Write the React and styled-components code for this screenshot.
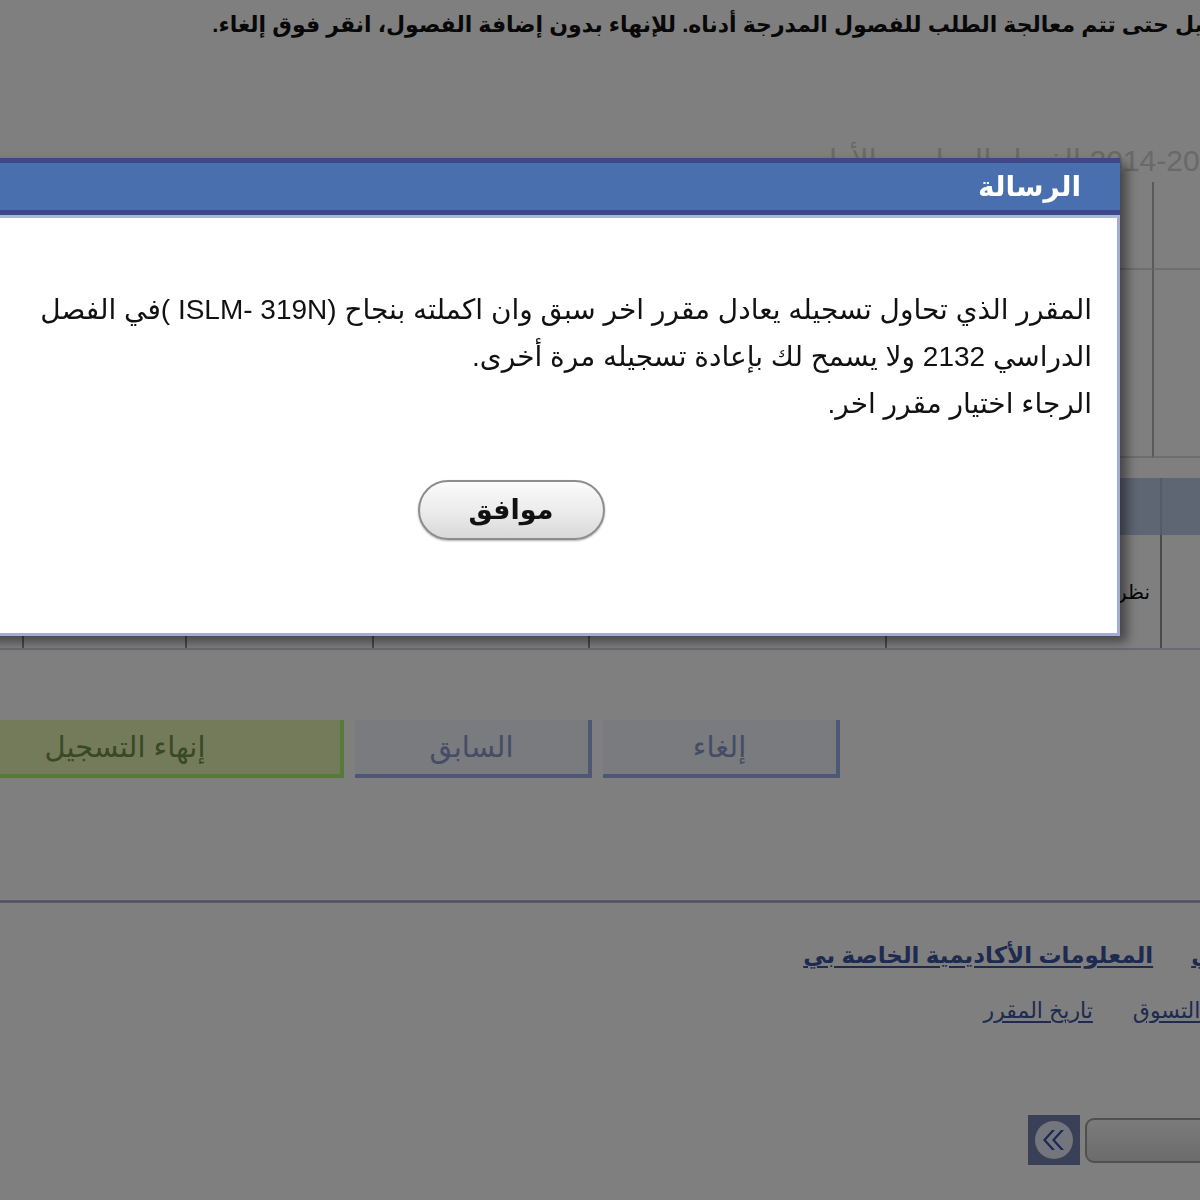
import React from "react";
import styled, { createGlobalStyle } from "styled-components";

const GlobalStyle = createGlobalStyle`
  html, body {
    margin: 0;
    padding: 0;
    background: #fff;
    overflow: hidden;
  }
  body {
    font-family: "Liberation Sans", "DejaVu Sans", sans-serif;
  }
`;

const Page = styled.div`
  direction: rtl;
  position: relative;
  width: 1200px;
  height: 1200px;
  overflow: hidden;
  padding-top: 10px;
  box-sizing: border-box;
  background: #fff;
  font-family: "Liberation Sans", "DejaVu Sans", sans-serif;
`;

const Intro = styled.p`
  margin: 0 -228px 0 0;
  font-size: 22px;
  line-height: 30px;
  font-weight: bold;
  color: #111;
  white-space: nowrap;
`;

const TermLabel = styled.div`
  margin: 106px -33px 0 0;
  font-size: 30px;
  line-height: 30px;
  color: #d2d2d2;
  white-space: nowrap;
`;

const InfoTable = styled.div`
  display: grid;
  grid-template-columns: 88px 1fr;
  grid-template-rows: 88px 188px;
  width: 1340px;
  margin: 6px -40px 0 0;
`;

const InfoCell = styled.div`
  border-bottom: 2px solid #dcdcdc;
  border-left: ${(p) => (p.$first ? "2px solid #b4b4b4" : "none")};
`;

const CourseTable = styled.div`
  display: grid;
  grid-template-columns: 80px 275px 297px 216px 187px 163px 122px;
  grid-template-rows: 57px 113px;
  width: 1340px;
  margin: 20px -40px 0 0;
  border-bottom: 2px solid #d4d4e0;
`;

const HeadCell = styled.div`
  display: flex;
  align-items: center;
  justify-content: center;
  padding: 0 10px;
  background: #bccbe6;
  border-left: 2px solid #a8b6d4;
  font-size: 18px;
  font-weight: bold;
  color: #223;
`;

const DataCell = styled.div`
  display: flex;
  align-items: center;
  padding: 0 10px;
  border-left: 2px solid #949494;
  font-size: 20px;
  color: #111;
`;

const ButtonRow = styled.div`
  display: flex;
  gap: 11px;
  padding-right: 360px;
  margin-top: 70px;
`;

const PageButton = styled.div`
  display: flex;
  align-items: center;
  justify-content: center;
  flex: none;
  box-sizing: border-box;
  width: ${(p) => (p.$wide ? "434px" : "237px")};
  height: 58px;
  font-size: 29px;
  background: ${(p) => (p.$green ? "#e6f6b6" : "#f2f6ff")};
  color: ${(p) => (p.$green ? "#74904c" : "#8c98cc")};
  border-right: 4px solid ${(p) => (p.$green ? "#aef470" : "#9eaeea")};
  border-bottom: 4px solid ${(p) => (p.$green ? "#aef470" : "#9eaeea")};
`;

const Rule = styled.div`
  margin-top: 122px;
  height: 1px;
  background: #9a9cc0;
  border-top: 1px solid #b8bad6;
  border-bottom: 1px solid #b8bad6;
`;

const LinkRow = styled.div`
  display: flex;
  gap: ${(p) => p.$gap}px;
  margin: ${(p) => p.$top}px ${(p) => -p.$shift}px 0 0;
  white-space: nowrap;
`;

const NavLink = styled.a`
  font-size: ${(p) => (p.$bold ? "23px" : "22px")};
  line-height: 30px;
  font-weight: ${(p) => (p.$bold ? "bold" : "normal")};
  color: #3c54a0;
  text-decoration: underline;
  text-underline-offset: 3px;
`;

const Pager = styled.div`
  display: flex;
  align-items: center;
  gap: 5px;
  margin: 89px -85px 0 0;
`;

const PagerField = styled.div`
  width: 200px;
  height: 45px;
  box-sizing: border-box;
  border: 2px solid #a0a0a0;
  border-radius: 9px;
  background: linear-gradient(#f6f6f6, #d8d8d8);
`;

const Overlay = styled.div`
  position: fixed;
  inset: 0;
  background: rgba(0, 0, 0, 0.5);
`;

const Dialog = styled.div`
  position: absolute;
  top: 158px;
  left: -98px;
  width: 1218px;
  height: 478px;
  box-sizing: border-box;
  display: flex;
  flex-direction: column;
  background: #fff;
  border: 3px solid #a4acd4;
  border-top: none;
  box-shadow: 7px 6px 10px rgba(0, 0, 0, 0.45);
  direction: rtl;
  font-family: "Liberation Sans", "DejaVu Sans", sans-serif;
`;

const TitleBar = styled.div`
  display: flex;
  align-items: center;
  height: 47px;
  padding-right: 39px;
  background: #4a6fae;
  border-top: 5px solid #3e4888;
  border-bottom: 5px solid #3e4888;
  box-shadow: 0 3px 0 #aab8d8;
  margin: 0 -3px 3px;
  color: #fff;
  font-size: 28px;
  font-weight: bold;
`;

const Body = styled.div`
  flex: 1;
  display: flex;
  flex-direction: column;
  padding: 68px 25px 0;
`;

const Message = styled.div`
  font-size: 28px;
  line-height: 47px;
  color: #111;
`;

const Line = styled.div`
  white-space: nowrap;
`;

const OkButton = styled.button`
  align-self: center;
  width: 187px;
  height: 60px;
  margin-top: 53px;
  border: 2px solid #8c8c8c;
  border-radius: 30px;
  background: linear-gradient(#fbfbfb, #ececec 50%, #d9d9d9);
  box-shadow: 0 1px 2px rgba(0, 0, 0, 0.3);
  font-family: "Liberation Sans", "DejaVu Sans", sans-serif;
  font-size: 27px;
  font-weight: bold;
  color: #111;
  cursor: pointer;
`;

function BackIcon() {
  return (
    <svg width="52" height="50" viewBox="0 0 52 50">
      <rect x="0" y="0" width="52" height="50" fill="#7480b0" />
      <circle cx="26" cy="25" r="19" fill="#e6ecfa" />
      <path d="M24 15 L15 25 L24 35 L27 35 L18 25 L27 15 Z" fill="#3c50a8" />
      <path d="M33 15 L24 25 L33 35 L36 35 L27 25 L36 15 Z" fill="#3c50a8" />
    </svg>
  );
}

const heads = ["", "نوع الجدول", "المقرر", "الشعبة", "الساعات", "الحالة", "الإجراء"];
const cells = ["", "نظري", "ISLM 319N", "1", "2", "", ""];

export default function App() {
  return (
    <>
      <GlobalStyle />
      <Page>
        <Intro>
          انقر فوق إنهاء التسجيل حتى تتم معالجة الطلب للفصول المدرجة أدناه. للإنهاء بدون إضافة الفصول، انقر فوق إلغاء.
        </Intro>
        <TermLabel>2014-2015 الفصل الدراسي الأول</TermLabel>
        <InfoTable>
          <InfoCell $first />
          <InfoCell />
          <InfoCell $first />
          <InfoCell />
        </InfoTable>
        <CourseTable>
          {heads.map((h, i) => (
            <HeadCell key={"h" + i}>{h}</HeadCell>
          ))}
          {cells.map((c, i) => (
            <DataCell key={"d" + i}>{c}</DataCell>
          ))}
        </CourseTable>
        <ButtonRow>
          <PageButton>إلغاء</PageButton>
          <PageButton>السابق</PageButton>
          <PageButton $green $wide>إنهاء التسجيل</PageButton>
        </ButtonRow>
        <Rule />
        <LinkRow $top={37} $shift={175} $gap={38}>
          <NavLink $bold>الجدول الدراسي</NavLink>
          <NavLink $bold>المعلومات الأكاديمية الخاصة بي</NavLink>
        </LinkRow>
        <LinkRow $top={26} $shift={44} $gap={40}>
          <NavLink>سلة التسوق</NavLink>
          <NavLink>تاريخ المقرر</NavLink>
        </LinkRow>
        <Pager>
          <PagerField />
          <BackIcon />
        </Pager>
      </Page>
      <Overlay />
      <Dialog>
        <TitleBar>الرسالة</TitleBar>
        <Body>
          <Message>
            <Line>المقرر الذي تحاول تسجيله يعادل مقرر اخر سبق وان اكملته بنجاح (ISLM- 319N )في الفصل</Line>
            <Line>الدراسي 2132 ولا يسمح لك بإعادة تسجيله مرة أخرى.</Line>
            <Line>الرجاء اختيار مقرر اخر.</Line>
          </Message>
          <OkButton>موافق</OkButton>
        </Body>
      </Dialog>
    </>
  );
}
